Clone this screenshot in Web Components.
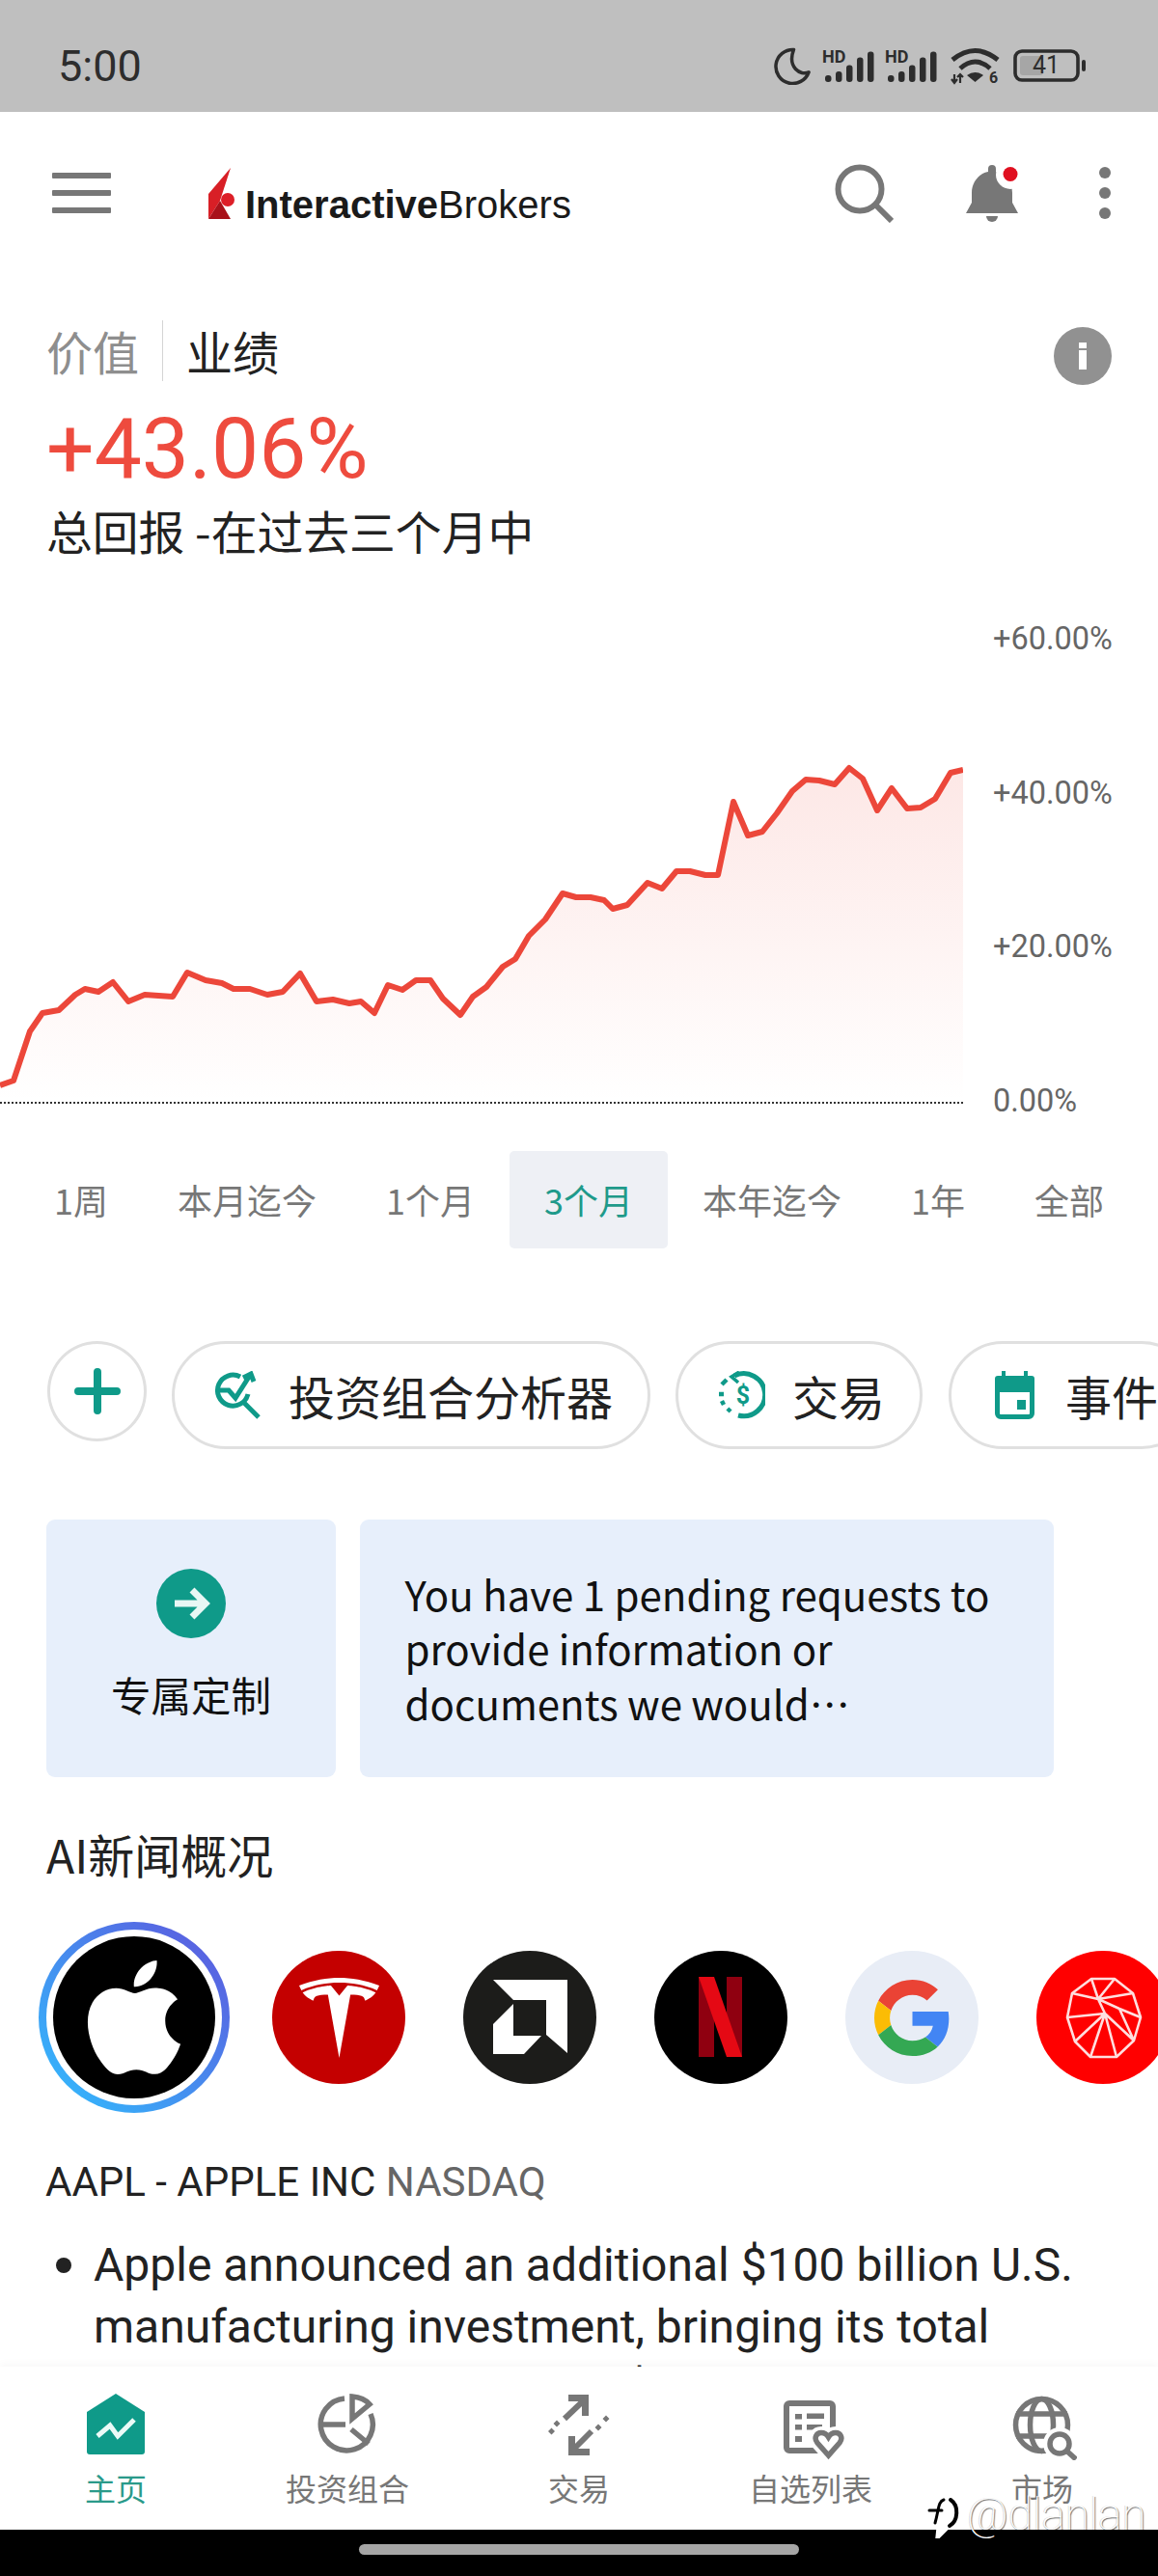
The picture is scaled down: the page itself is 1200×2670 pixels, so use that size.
<!DOCTYPE html>
<html lang="zh">
<head>
<meta charset="utf-8">
<title>Interactive Brokers</title>
<style>
  html, body { margin: 0; padding: 0; background: #fff; }
  body { font-family: "Noto Sans CJK SC", Roboto, sans-serif; color: #1c1c1c; }
</style>
</head>
<body>
<ib-app>
  <ib-status-bar></ib-status-bar>
  <ib-main>
    <ib-header></ib-header>
    <ib-performance></ib-performance>
    <ib-chart></ib-chart>
    <ib-periods></ib-periods>
    <ib-chips></ib-chips>
    <ib-cards></ib-cards>
    <ib-news></ib-news>
  </ib-main>
  <ib-bottom-nav></ib-bottom-nav>
  <ib-gesture-bar></ib-gesture-bar>
  <ib-watermark></ib-watermark>
</ib-app>

<script>
const CJK = '"Noto Sans CJK SC", Roboto, sans-serif';
const LATIN = 'Roboto, "Noto Sans CJK SC", sans-serif';
const TEAL = '#0f9a89';
const GREY = '#777';

// Outer page frame
class IbApp extends HTMLElement {
  constructor() {
    super();
    this.attachShadow({ mode: "open" });
    this.shadowRoot.innerHTML = `
      <style>
        :host { display: flex; flex-direction: column; position: relative; width: 1200px; height: 2670px; overflow: hidden; background: #fff; }
      </style>
      <slot></slot>`;
  }
}

class IbMain extends HTMLElement {
  constructor() {
    super();
    this.attachShadow({ mode: "open" });
    this.shadowRoot.innerHTML = `
      <style>
        :host { display: block; height: 2337px; overflow: hidden; flex: none; }
      </style>
      <slot></slot>`;
  }
}

class IbStatusBar extends HTMLElement {
  connectedCallback() {
    const bars = [[3, 27], [14, 23], [25, 16.5], [36, 8.5], [47, 2.5]]
      .map(([x, y]) => `<rect x="${x}" y="${y}" width="6.5" height="${34 - y}" rx="3"/>`).join("");
    const signal = `
      <svg width="56" height="46" viewBox="-1 -6 56 46" fill="#2d2d2d">
        <text x="0" y="13.5" font-family="Roboto, sans-serif" font-size="18" font-weight="700">HD</text>
        ${bars}
      </svg>`;
    this.attachShadow({ mode: "open" }).innerHTML = `
      <style>
        :host { display: flex; align-items: center; justify-content: space-between; flex: none; height: 116px; background: #bfbfbf; padding: 20px 74px 0 60px; box-sizing: border-box; color: #2d2d2d; }
        .time { font: 400 45px/1 ${LATIN}; }
        .icons { display: flex; align-items: center; }
        svg { display: block; flex: none; }
        .moon { margin-right: 10px; }
        .second { margin-left: 9px; }
        .wifi { margin: 0 13px; }
      </style>
      <span class="time">5:00</span>
      <div class="icons">
        <svg class="moon" width="39" height="40" viewBox="0 0 40 40" fill="none" stroke="#2d2d2d" stroke-width="3.6" stroke-linejoin="round"><path d="M21 3A18 18 0 1 0 37 27C28 31 14 22 21 3Z"/></svg>
        ${signal}
        <span class="second">${signal}</span>
        <svg class="wifi" width="52" height="47" viewBox="0 -4 52 47" fill="none" stroke="#2d2d2d">
          <path d="M2 13Q25.5-6 49 13" stroke-width="5"/>
          <path d="M10 22Q25.5 8 41 22" stroke-width="5"/>
          <path d="M17 29Q25.5 23 34 29L25.5 36Z" fill="#2d2d2d" stroke="none"/>
          <path d="M4 28V37M1 33L4 37 7 33M10 37V28M7 31L10 28 13 31" stroke-width="2.2"/>
          <text x="40" y="37" font-family="Roboto, sans-serif" font-size="16" font-weight="700" fill="#2d2d2d" stroke="none">6</text>
        </svg>
        <svg width="76" height="34" viewBox="0 0 76 34">
          <rect x="2" y="2" width="65" height="30" rx="7" fill="none" stroke="#2d2d2d" stroke-width="3.6"/>
          <rect x="7" y="7" width="24" height="20" rx="3" fill="#a6a6a6"/>
          <text x="34" y="25" text-anchor="middle" font-family="Roboto, sans-serif" font-size="25" fill="#2d2d2d">41</text>
          <rect x="71" y="11" width="4" height="12" rx="2" fill="#2d2d2d"/>
        </svg>
      </div>`;
  }
}

class IbHeader extends HTMLElement {
  connectedCallback() {
    this.attachShadow({ mode: "open" }).innerHTML = `
      <style>
        :host { display: flex; align-items: center; height: 168px; position: relative; }
        .menu { display: flex; flex-direction: column; gap: 12px; margin-left: 54px; width: 61px; }
        .menu i { display: block; height: 6px; background: ${GREY}; border-radius: 1px; }
        .logo { display: flex; align-items: flex-end; gap: 11px; margin-left: 101px; height: 53px; }
        .logo svg { display: block; flex: none; }
        .word { font: 400 40px/1 "Liberation Sans", Arial, sans-serif; color: #1a1a1a; margin-bottom: -5px; white-space: nowrap; }
        .word b { font-weight: 700; }
        .actions { margin-left: auto; display: flex; align-items: center; margin-right: 49px; }
        .actions svg { display: block; flex: none; }
      </style>
      <div class="menu"><i></i><i></i><i></i></div>
      <div class="logo">
        <svg width="27" height="53" viewBox="0 0 27 53">
          <path d="M23 0L0 27V53L12 34Z" fill="#d81f26"/>
          <path d="M0 53L12 34 23 53Z" fill="#a8121a"/>
          <circle cx="20" cy="33" r="7" fill="#dd1f28"/>
        </svg>
        <span class="word"><b>Interactive</b>Brokers</span>
      </div>
      <div class="actions">
        <svg width="61" height="61" viewBox="0 0 61 61" fill="none" stroke="${GREY}" stroke-width="6"><circle cx="26" cy="26" r="22.5"/><path d="M42 42L59 59"/></svg>
        <svg style="margin-left:74px" width="60" height="61" viewBox="0 0 60 61">
          <path d="M24 8V5a4 4 0 0 1 8 0V8C42 10 49 19 49 30V40L55 51H1L7 40V30C7 19 14 10 24 8Z" fill="${GREY}"/>
          <path d="M22 54H34A6 6 0 0 1 22 54Z" fill="${GREY}"/>
          <circle cx="47" cy="11" r="15" fill="#fff"/>
          <circle cx="47" cy="10.500" r="7.500" fill="#e01020"/>
        </svg>
        <svg style="margin-left:79px" width="12" height="54" viewBox="0 0 12 54" fill="${GREY}"><circle cx="6" cy="6" r="6"/><circle cx="6" cy="27" r="6"/><circle cx="6" cy="48" r="6"/></svg>
      </div>`;
  }
}

class IbPerformance extends HTMLElement {
  connectedCallback() {
    this.attachShadow({ mode: "open" }).innerHTML = `
      <style>
        :host { display: block; height: 296px; padding: 48px 48px 0; box-sizing: border-box; font-family: ${CJK}; }
        .toggle { display: flex; align-items: flex-start; height: 63px; }
        .seg { font-size: 48px; line-height: 63px; }
        .off { color: #8e8e8e; padding-right: 24px; border-right: 1.500px solid #d4d4d4; }
        .on { color: #222; padding-left: 24px; }
        .info { margin-left: auto; margin-top: 7px; width: 60px; height: 60px; flex: none; }
        .value { font: 400 87.500px/88px ${LATIN}; color: #ee4b3e; margin-top: 26px; }
        .sub { font-size: 47.800px; line-height: 60px; color: #222; margin-top: 11px; white-space: nowrap; }
      </style>
      <div class="toggle">
        <span class="seg off">价值</span>
        <span class="seg on">业绩</span>
        <svg class="info" viewBox="0 0 60 60"><circle cx="30" cy="30" r="30" fill="#919191"/><rect x="26" y="16" width="8" height="6" fill="#fff"/><rect x="26" y="24" width="8" height="20" fill="#fff"/></svg>
      </div>
      <div class="value">+43.06%</div>
      <div class="sub">总回报 -在过去三个月中</div>`;
  }
}

class IbChart extends HTMLElement {
  connectedCallback() {
    // 기준선 위 수익률 곡선 좌표
    const points = [[0,1125],[14,1120],[31,1069],[44,1050],[61,1047],[78,1031],[88,1025],[102,1028],[117,1018],[133,1038],[150,1031],[179,1033],[194,1008],[213,1016],[230,1019],[242,1025],[259,1025],[277,1031],[293,1028],[311,1009],[328,1038],[345,1036],[362,1040],[374,1038],[388,1050],[402,1021],[417,1026],[431,1016],[446,1016],[459,1035],[477,1052],[490,1033],[504,1023],[521,1002],[534,994],[548,970],[565,953],[583,926],[597,930],[612,930],[626,933],[635,942],[650,938],[671,915],[686,921],[701,903],[715,903],[731,907],[744,907],[760,831],[775,866],[790,862],[805,843],[821,820],[835,808],[849,809],[865,813],[880,796],[894,807],[909,840],[924,817],[940,838],[954,837],[969,828],[985,801],[998,798]];
    const line = points.map(p => p.join(",")).join(" ");
    const labels = ["+60.00%", "+40.00%", "+20.00%", "0.00%"].map(t => `<div>${t}</div>`).join("");
    this.attachShadow({ mode: "open" }).innerHTML = `
      <style>
        :host { display: flex; height: 613px; }
        svg { display: block; flex: none; }
        .labels { margin-left: 31px; padding-top: 3px; font: 400 32.500px/159.500px ${LATIN}; color: #666; white-space: nowrap; }
      </style>
      <svg width="998" height="613" viewBox="0 580 998 613">
        <defs>
          <linearGradient id="area" x1="0" y1="800" x2="0" y2="1142" gradientUnits="userSpaceOnUse">
            <stop offset="0" stop-color="#ee4b3e" stop-opacity=".13"/>
            <stop offset="1" stop-color="#ee4b3e" stop-opacity="0"/>
          </linearGradient>
        </defs>
        <polygon points="0,1142 ${line} 998,1142" fill="url(#area)"/>
        <polyline points="${line}" fill="none" stroke="#ec473a" stroke-width="6" stroke-linejoin="round"/>
        <line x1="0" y1="1143" x2="998" y2="1143" stroke="#333" stroke-width="2" stroke-dasharray="2 2"/>
      </svg>
      <div class="labels">${labels}</div>`;
  }
}

class IbPeriods extends HTMLElement {
  connectedCallback() {
    const items = ["1周", "本月迄今", "1个月", "3个月", "本年迄今", "1年", "全部"]
      .map((t, i) => `<span class="${i === 3 ? "active" : ""}">${t}</span>`).join("");
    this.attachShadow({ mode: "open" }).innerHTML = `
      <style>
        :host { display: flex; height: 101px; padding-left: 20px; font: 400 36px/101px ${CJK}; color: ${GREY}; white-space: nowrap; }
        span { padding: 0 36px; border-radius: 5px; }
        .active { background: #eef0f5; color: #1f9a8a; }
      </style>
      ${items}`;
  }
}

class IbChip extends HTMLElement {
  constructor() {
    super();
    this.attachShadow({ mode: "open" }).innerHTML = `
      <style>
        :host { display: flex; align-items: center; flex: none; height: 112px; box-sizing: border-box; border: 3px solid #e0e0e0; border-radius: 56px; padding: 0 36px 0 41px; gap: 28px; background: #fff; font: 400 48px/1 ${CJK}; color: #222; white-space: nowrap; }
        ::slotted(svg) { display: block; flex: none; }
      </style>
      <slot name="icon"></slot><slot></slot>`;
  }
}

class IbChips extends HTMLElement {
  connectedCallback() {
    this.attachShadow({ mode: "open" }).innerHTML = `
      <style>
        :host { display: flex; align-items: flex-start; gap: 26px; height: 112px; margin-top: 96px; padding-left: 49px; overflow: hidden; }
        .plus { flex: none; width: 103px; height: 104px; box-sizing: border-box; border: 3px solid #e0e0e0; border-radius: 50%; display: flex; align-items: center; justify-content: center; }
      </style>
      <div class="plus"><svg width="48" height="48" viewBox="0 0 48 48" stroke="${TEAL}" stroke-width="8" stroke-linecap="round"><path d="M24 4V44M4 24H44"/></svg></div>
      <ib-chip>
        <svg slot="icon" width="49" height="50" viewBox="0 0 49 50" fill="none" stroke="${TEAL}" stroke-width="5">
          <path d="M27 6A16 16 0 1 0 35 24"/>
          <path d="M5 20H15L22 28 36 6M30 7L38 3 41 11"/>
          <path d="M30 32L46 48"/>
        </svg>
        投资组合分析器
      </ib-chip>
      <ib-chip>
        <svg slot="icon" width="49" height="50" viewBox="0 0 49 50" fill="none" stroke="${TEAL}" stroke-width="5">
          <path d="M17 5A22 22 0 1 1 21 46"/>
          <path d="M4 14L9 9M1 24H6M3 34L7 32M10 42L13 39" stroke-width="4.500"/>
          <path d="M22 1L14 6 21 12" stroke-width="3.500"/>
          <text x="26" y="34" text-anchor="middle" font-family="Roboto, sans-serif" font-size="25" font-weight="700" fill="${TEAL}" stroke="none">$</text>
        </svg>
        交易
      </ib-chip>
      <ib-chip style="margin-left:1px">
        <svg slot="icon" width="49" height="50" viewBox="0 0 49 50">
          <rect x="4" y="5" width="41" height="17" rx="3" fill="${TEAL}"/>
          <rect x="11" y="0" width="4" height="8" fill="${TEAL}"/><rect x="34" y="0" width="4" height="8" fill="${TEAL}"/>
          <path d="M6.500 16V44a3.500 3.500 0 0 0 3.500 3.500H39a3.500 3.500 0 0 0 3.500-3.500V16" fill="none" stroke="${TEAL}" stroke-width="5"/>
          <rect x="27" y="30" width="9" height="10" fill="${TEAL}"/>
        </svg>
        事件
      </ib-chip>`;
  }
}

class IbCards extends HTMLElement {
  connectedCallback() {
    this.attachShadow({ mode: "open" }).innerHTML = `
      <style>
        :host { display: flex; gap: 24.500px; height: 267px; margin-top: 73px; padding-left: 48px; font-family: ${CJK}; }
        .card { background: #e7effb; border-radius: 9px; box-sizing: border-box; flex: none; }
        .custom { width: 300px; display: flex; flex-direction: column; align-items: center; padding-top: 51px; }
        .custom svg { display: block; width: 72px; height: 72px; }
        .custom span { font-size: 41.500px; line-height: 56px; margin-top: 30px; color: #111; }
        .notice { width: 719px; padding: 48.500px 30px 0 47px; font-size: 42px; line-height: 56.500px; color: #111; }
      </style>
      <div class="card custom">
        <svg viewBox="0 0 72 72"><circle cx="36" cy="36" r="36" fill="${TEAL}"/><path d="M19 36H50M37 22L51 36 37 50" fill="none" stroke="#e7f7f4" stroke-width="7"/></svg>
        <span>专属定制</span>
      </div>
      <div class="card notice">You have 1 pending requests to provide information or documents we would…</div>`;
  }
}

class IbNews extends HTMLElement {
  connectedCallback() {
    this.attachShadow({ mode: "open" }).innerHTML = `
      <style>
        :host { display: block; font-family: ${LATIN}; }
        h2 { margin: 49px 0 0 48px; font: 400 48px/60px ${CJK}; color: #222; }
        .logos { display: flex; height: 198px; margin-top: 41px; padding-left: 39.500px; width: 1400px; }
        .ring { flex: none; width: 198px; height: 198px; border-radius: 50%; background: linear-gradient(45deg, #35b4fb 10%, #5a5fe0 90%); display: flex; align-items: center; justify-content: center; margin-right: 14.500px; }
        .gap { width: 182px; height: 182px; border-radius: 50%; background: #fff; display: flex; align-items: center; justify-content: center; }
        .inner { width: 168px; height: 168px; border-radius: 50%; background: #000; display: flex; align-items: center; justify-content: center; }
        .logo { flex: none; width: 138px; height: 138px; border-radius: 50%; margin: 30px; display: flex; align-items: center; justify-content: center; overflow: hidden; }
        .logo svg { display: block; flex: none; }
        .ticker { margin: 44px 0 0 47px; font-size: 42px; line-height: 56px; color: #222; white-space: nowrap; }
        .ticker span { color: #666; }
        .item { display: grid; grid-template-columns: 17px 1fr; column-gap: 22px; margin: 26px 40px 0 58px; font-size: 48px; line-height: 64px; color: #222; }
        .dot { width: 16px; height: 16px; border-radius: 50%; background: #222; margin-top: 24px; }
      </style>
      <h2>AI新闻概况</h2>
      <div class="logos">
        <div class="ring"><div class="gap"><div class="inner">
          <svg width="118" height="118" viewBox="0 0 24 24" fill="#fff"><path d="M12.152 6.896c-.948 0-2.415-1.078-3.96-1.04-2.04.027-3.91 1.183-4.961 3.014-2.117 3.675-.546 9.103 1.519 12.09 1.013 1.454 2.208 3.09 3.792 3.039 1.52-.065 2.09-.987 3.935-.987 1.831 0 2.35.987 3.96.948 1.637-.026 2.676-1.48 3.676-2.948 1.156-1.688 1.636-3.325 1.662-3.415-.039-.013-3.182-1.221-3.22-4.857-.026-3.04 2.48-4.494 2.597-4.559-1.429-2.09-3.623-2.324-4.39-2.376-2-.156-3.675 1.09-4.61 1.09zM15.53 3.83c.843-1.012 1.4-2.427 1.245-3.83-1.207.052-2.662.805-3.532 1.818-.78.896-1.454 2.338-1.273 3.714 1.338.104 2.715-.688 3.559-1.701"/></svg>
        </div></div></div>
        <div class="logo" style="background:#c40000">
          <svg width="83" height="83" viewBox="0 0 24 24" fill="#fff"><path d="M12 5.362l2.475-3.026s4.245.09 8.471 2.054c-1.082 1.636-3.231 2.438-3.231 2.438-.146-1.439-1.154-1.79-4.354-1.79L12 24 8.619 5.034c-3.18 0-4.188.354-4.335 1.792 0 0-2.146-.795-3.229-2.43C5.28 2.431 9.525 2.34 9.525 2.34L12 5.362zm0-3.899c3.415-.03 7.326.528 11.328 2.28.535-.968.672-1.395.672-1.395C19.625.612 15.528.015 12 0 8.472.015 4.375.61 0 2.349c0 0 .195.525.672 1.396C4.674 1.989 8.585 1.435 12 1.46z"/></svg>
        </div>
        <div class="logo" style="background:#1c1c1a">
          <svg width="138" height="138" viewBox="0 0 138 138" fill="#fff"><path d="M31 30H108V106L86 87V51H52Z"/><path d="M52 55L31 76V107H63L81 88H52Z"/></svg>
        </div>
        <div class="logo" style="background:#000">
          <svg width="138" height="138" viewBox="0 0 138 138"><rect x="46" y="27" width="16" height="83" fill="#8f0010"/><rect x="75" y="27" width="16" height="83" fill="#8f0010"/><path d="M46 27H62L91 110H75Z" fill="#e50914"/></svg>
        </div>
        <div class="logo" style="background:#e8edf6">
          <svg width="79" height="79" viewBox="0 0 48 48">
            <path fill="#EA4335" d="M24 9.5c3.54 0 6.71 1.22 9.21 3.6l6.85-6.85C35.9 2.38 30.47 0 24 0 14.62 0 6.51 5.38 2.56 13.22l7.98 6.19C12.43 13.72 17.74 9.5 24 9.5z"/>
            <path fill="#4285F4" d="M46.98 24.55c0-1.57-.15-3.09-.38-4.55H24v9.02h12.94c-.58 2.96-2.26 5.48-4.78 7.18l7.73 6c4.51-4.18 7.09-10.36 7.09-17.65z"/>
            <path fill="#FBBC05" d="M10.53 28.59c-.48-1.45-.76-2.99-.76-4.59s.27-3.14.76-4.59l-7.98-6.19C.92 16.46 0 20.12 0 24c0 3.88.92 7.54 2.56 10.78l7.97-6.19z"/>
            <path fill="#34A853" d="M24 48c6.48 0 11.93-2.13 15.89-5.81l-7.73-6c-2.15 1.45-4.92 2.3-8.16 2.3-6.26 0-11.57-4.22-13.47-9.91l-7.98 6.19C6.51 42.62 14.62 48 24 48z"/>
          </svg>
        </div>
        <div class="logo" style="background:#ff0000">
          <svg width="138" height="138" viewBox="0 0 138 138" fill="none" stroke="#ffdede" stroke-width="2.600" stroke-linejoin="round">
            <path d="M57 29H81L100 44 108 69 101 93 83 110H56L40 94 32 69 37 44Z"/>
            <path d="M57 29L64 50 37 44M81 29L64 50 100 44M64 50L71 65 32 69M64 50L86 60 108 69M71 65L40 94M71 65L56 110M71 65L101 93M71 65L83 110M86 60L101 93"/>
          </svg>
        </div>
      </div>
      <div class="ticker">AAPL - APPLE INC <span>NASDAQ</span></div>
      <div class="item"><i class="dot"></i><div>Apple announced an additional $100 billion U.S. manufacturing investment, bringing its total domestic commitment to $600 billion</div></div>`;
  }
}

class IbNavItem extends HTMLElement {
  constructor() {
    super();
    this.attachShadow({ mode: "open" }).innerHTML = `
      <style>
        :host { display: flex; flex-direction: column; align-items: center; flex: 1 1 0; color: ${GREY}; font: 400 32px/40px ${CJK}; }
        :host([active]) { color: #2a9a8a; }
        ::slotted(svg) { display: block; margin-bottom: 8px; }
      </style>
      <slot name="icon"></slot><slot></slot>`;
  }
}

class IbBottomNav extends HTMLElement {
  connectedCallback() {
    this.attachShadow({ mode: "open" }).innerHTML = `
      <style>
        :host { display: flex; flex: none; height: 169px; box-sizing: border-box; padding-top: 25px; background: #fff; position: relative; z-index: 1; box-shadow: 0 -3px 8px rgba(0,0,0,.03); }
      </style>
      <ib-nav-item active>
        <svg slot="icon" width="72" height="72" viewBox="0 0 72 72">
          <path d="M36 3L66 22V63a3 3 0 0 1-3 3H9a3 3 0 0 1-3-3V22Z" fill="${TEAL}"/>
          <path d="M17 47L30 36 38 47 55 30" fill="none" stroke="#eafaf7" stroke-width="5"/>
        </svg>
        主页
      </ib-nav-item>
      <ib-nav-item>
        <svg slot="icon" width="72" height="72" viewBox="0 0 72 72" fill="none" stroke="${GREY}" stroke-width="5.500">
          <path d="M33 8A27 27 0 1 0 60 24"/>
          <path d="M9 35H34M40 40L58 55"/>
          <path d="M41 6Q53 7 59 14L41 29Z"/>
        </svg>
        投资组合
      </ib-nav-item>
      <ib-nav-item>
        <svg slot="icon" width="72" height="72" viewBox="0 0 72 72" fill="none" stroke="${GREY}" stroke-width="7">
          <path d="M25 7.500H42.500V26"/>
          <path d="M42 9L21 29" stroke-width="6"/>
          <path d="M47 63.500H28.500V47"/>
          <path d="M29 62L49 42" stroke-width="6"/>
          <g fill="${GREY}" stroke="none">
            <path d="M13 30.500L16.500 34 13 37.500 9.500 34ZM7.500 38.500L11 42 7.500 45.500 4 42ZM56 34.500L59.500 38 56 41.500 52.500 38ZM64 25.500L67.500 29 64 32.500 60.500 29Z"/>
          </g>
        </svg>
        交易
      </ib-nav-item>
      <ib-nav-item>
        <svg slot="icon" width="72" height="72" viewBox="0 0 72 72">
          <rect x="11" y="13" width="48" height="49" rx="3" fill="none" stroke="${GREY}" stroke-width="6"/>
          <g fill="${GREY}"><rect x="20" y="24" width="7" height="5.500"/><rect x="20" y="35" width="7" height="5.500"/><rect x="20" y="47" width="7" height="6"/><rect x="32" y="23.500" width="18" height="5.500"/><rect x="32" y="35" width="16" height="5.500"/></g>
          <path d="M54.500 68L42 54C38 48 42 43 47 43 51 43 53 45 54.500 47 56 45 58 43 62 43 67 43 71 48 67 54Z" fill="#fff" stroke="#fff" stroke-width="12"/>
          <path d="M54.500 67L43 54C39 49 42 43.500 47 43.500 51 43.500 53 45.500 54.500 48 56 45.500 58 43.500 62 43.500 67 43.500 70 49 66 54Z" fill="none" stroke="${GREY}" stroke-width="5.500"/>
        </svg>
        自选列表
      </ib-nav-item>
      <ib-nav-item>
        <svg slot="icon" width="72" height="72" viewBox="0 0 72 72" fill="none" stroke="${GREY}" stroke-width="5.500">
          <circle cx="35.500" cy="35.500" r="27"/>
          <ellipse cx="35.500" cy="35.500" rx="12" ry="27"/>
          <path d="M9 24H62M9 47H62"/>
          <circle cx="54" cy="55" r="17" fill="#fff" stroke="none"/>
          <circle cx="54" cy="55" r="10"/>
          <path d="M61 62L71 71"/>
        </svg>
        市场
      </ib-nav-item>`;
  }
}

class IbGestureBar extends HTMLElement {
  connectedCallback() {
    this.attachShadow({ mode: "open" }).innerHTML = `
      <style>
        :host { display: flex; align-items: flex-start; justify-content: center; flex: none; height: 48px; background: #000; padding-top: 15px; box-sizing: border-box; }
        div { width: 456px; height: 11px; border-radius: 5.500px; background: #a5a5a5; }
      </style>
      <div></div>`;
  }
}

// Image-host watermark that sits over the nav and gesture bar
class IbWatermark extends HTMLElement {
  connectedCallback() {
    this.attachShadow({ mode: "open" }).innerHTML = `
      <style>
        :host { position: absolute; left: 958px; top: 2581px; z-index: 2; display: flex; align-items: center; gap: 6px; }
        svg { display: block; }
        span { font: 100 46px/50px Roboto, sans-serif; color: #fff; text-shadow: 1px 1px 1px rgba(0,0,0,.6), -1px 0 0 rgba(0,0,0,.15); white-space: nowrap; }
      </style>
      <svg width="38" height="50" viewBox="0 0 38 50" fill="none" stroke-linecap="round">
        <path d="M26 10C36 14 35 34 24 38L14 48 15 38" stroke="#fff" stroke-width="5"/>
        <path d="M27 10C36 16 35 32 26 37" stroke="#000" stroke-width="4"/>
        <path d="M20 10C14 12 15 20 11 34M5 21H18" stroke="#000" stroke-width="3"/>
      </svg>
      <span>@dlanlan</span>`;
  }
}

customElements.define("ib-app", IbApp);
customElements.define("ib-main", IbMain);
customElements.define("ib-status-bar", IbStatusBar);
customElements.define("ib-header", IbHeader);
customElements.define("ib-performance", IbPerformance);
customElements.define("ib-chart", IbChart);
customElements.define("ib-periods", IbPeriods);
customElements.define("ib-chip", IbChip);
customElements.define("ib-chips", IbChips);
customElements.define("ib-cards", IbCards);
customElements.define("ib-news", IbNews);
customElements.define("ib-nav-item", IbNavItem);
customElements.define("ib-bottom-nav", IbBottomNav);
customElements.define("ib-gesture-bar", IbGestureBar);
customElements.define("ib-watermark", IbWatermark);
</script>
</body>
</html>
